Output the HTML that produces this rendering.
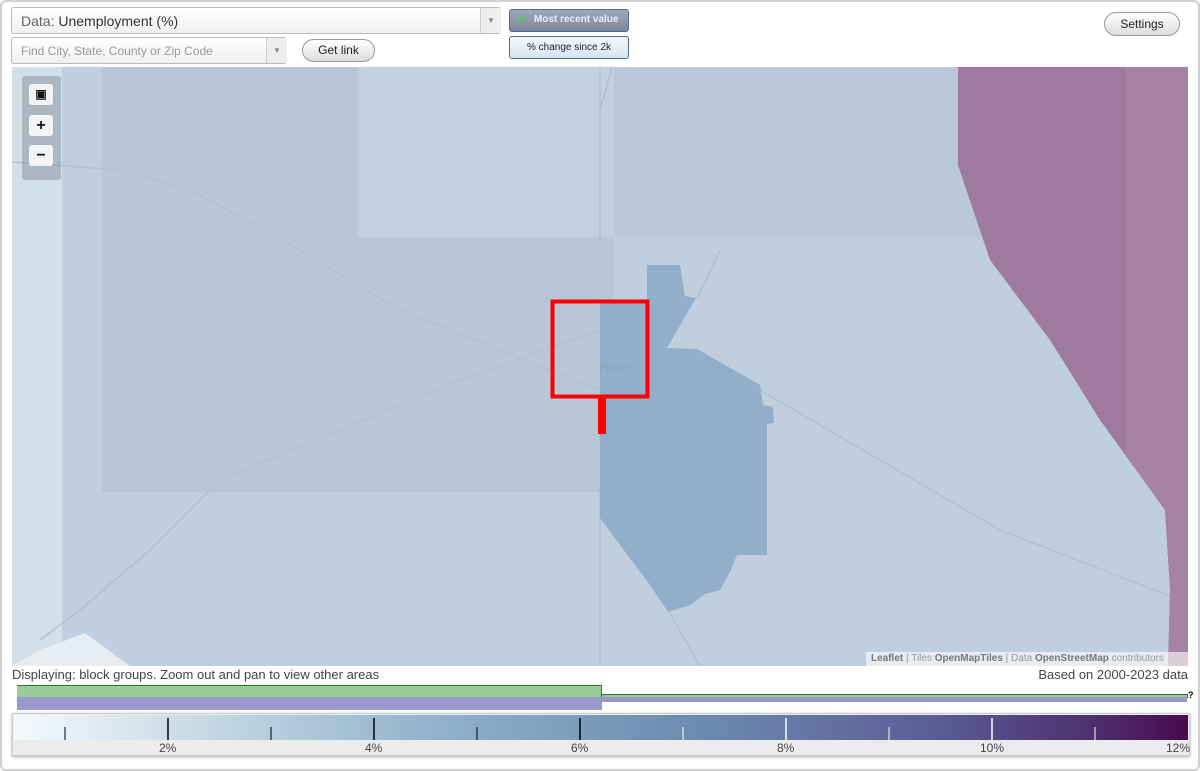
<!DOCTYPE html>
<html><head><meta charset="utf-8"><style>
body{margin:0;width:1200px;height:771px;background:#fff;font-family:"Liberation Sans",sans-serif;position:relative;overflow:hidden}
.frame{position:absolute;left:0;top:0;width:1196px;height:767px;border:2px solid #d0d0d0;border-radius:6px}
.abs{position:absolute}
.sel{border:1px solid #bbb;border-radius:3px;background:linear-gradient(#fff,#f0f0f0);box-sizing:border-box}
.btn{border:1px solid #999;border-radius:12px;background:linear-gradient(#fff,#ddd);font-size:12px;text-align:center;box-sizing:border-box;color:#222}
.zb{position:absolute;left:7px;width:24px;height:21px;background:#f1f3f4;border-radius:3px;text-align:center;font-weight:bold;font-size:16px;line-height:21px;color:#111}
</style></head><body>
<div class="frame"></div>
<div class="abs sel" style="left:11px;top:7px;width:490px;height:27px;font-size:14px;color:#666;padding:5px 9px">Data: <span style="color:#333">Unemployment (%)</span></div>
<div class="abs" style="left:480px;top:8px;width:20px;height:25px;border-left:1px solid #ccc;background:#eee;font-size:8px;color:#888;text-align:center;line-height:25px">▼</div>
<div class="abs sel" style="left:11px;top:37px;width:276px;height:27px;font-size:12px;color:#999;padding:6px 9px">Find City, State, County or Zip Code</div>
<div class="abs" style="left:266px;top:38px;width:20px;height:25px;border-left:1px solid #ccc;background:#eee;font-size:8px;color:#888;text-align:center;line-height:25px">▼</div>
<div class="abs btn" style="left:302px;top:39px;width:73px;height:23px;line-height:21px">Get link</div>
<div class="abs" style="left:509px;top:9px;width:120px;height:23px;border:1px solid #4a6d9a;border-radius:3px;background:linear-gradient(#9ea8b8,#7d879a);box-sizing:border-box;font-size:10px;font-weight:bold;color:#eef;line-height:20px;padding-left:24px">Most recent value<span style="position:absolute;left:6px;top:0;color:#5c5;font-size:13px">✔</span></div>
<div class="abs" style="left:509px;top:36px;width:120px;height:23px;border:1px solid #4a6d9a;border-radius:3px;background:linear-gradient(#f4f8fc,#d8e4ef);box-sizing:border-box;font-size:10px;color:#223;line-height:21px;text-align:center">% change since 2k</div>
<div class="abs btn" style="left:1104px;top:12px;width:76px;height:24px;line-height:22px">Settings</div>

<svg class="abs" style="left:12px;top:67px" width="1176" height="599" viewBox="12 67 1176 599">
<rect x="12" y="67" width="1176" height="599" fill="#bfcfdf"/>
<rect x="12" y="67" width="50" height="599" fill="#d3e0e9"/>
<rect x="102" y="67" width="256" height="425" fill="#b8c7d8"/>
<rect x="358" y="237" width="256" height="255" fill="#b8c7d8"/>
<rect x="358" y="67" width="256" height="170" fill="#c2d1e0"/>
<rect x="614" y="67" width="512" height="170" fill="#b9c9d9"/>
<polygon points="12,666 40,650 85,633 130,666" fill="#e6eef3"/>
<g fill="none" stroke="#b1c1d2" stroke-width="1.5">
<path d="M12,162 L120,170 L190,190 L265,230 L400,310 L600,390 M600,330 L460,380 L220,480 L150,550 L80,610 L40,640"/>
<path d="M600,67 L600,666 M612,67 L600,110 M697,298 L720,250"/>
<path d="M760,390 L1000,530 L1180,600 M668,610 L700,666"/>
</g>
<polygon points="958,67 1188,67 1188,666 1168,666 1170,590 1165,510 1100,420 1050,340 990,260 958,165" fill="#9e7b9e"/>
<polygon points="1126,67 1188,67 1188,666 1168,666 1170,590 1165,510 1126,456" fill="#a682a4"/>
<polygon points="600,302 647,302 647,265 680,265 685,296 696,298 667,348 697,349 760,385 763,405 773,407 774,423 767,424 767,555 737,555 730,572 720,590 705,594 690,605 668,612 650,585 620,545 600,518" fill="#93aec8"/>
<text x="600" y="372" font-size="12" fill="#8ea4bc" font-family="DejaVu Sans">Freer</text>
<rect x="552.5" y="301.5" width="95" height="95" fill="none" stroke="#ff0000" stroke-width="4"/>
<rect x="598" y="397" width="8" height="37" fill="#ff0000"/>
</svg>
<div class="abs" style="left:22px;top:76px;width:39px;height:104px;background:rgba(140,150,160,0.55);border-radius:3px">
<div class="zb" style="top:8px;font-size:12px">▣</div>
<div class="zb" style="top:39px">+</div>
<div class="zb" style="top:69px">−</div></div>
<div class="abs" style="left:866px;top:652px;width:322px;height:14px;background:rgba(255,255,255,0.6);font-size:10px;color:#999;line-height:14px;padding-left:5px;box-sizing:border-box"><b style="color:#777">Leaflet</b> | Tiles <b style="color:#777">OpenMapTiles</b> | Data <b style="color:#777">OpenStreetMap</b> contributors</div>
<div class="abs" style="left:12px;top:667px;font-size:13px;color:#444">Displaying: block groups. Zoom out and pan to view other areas</div>
<div class="abs" style="right:12px;top:667px;font-size:13px;color:#444">Based on 2000-2023 data</div>
<div class="abs" style="left:17px;top:685px;width:585px;height:12px;background:#99cc99;border-top:1px solid #2a7a2a;border-right:1px solid #2a7a2a;box-sizing:border-box"></div>
<div class="abs" style="left:602px;top:694px;width:585px;height:3px;background:#99cc99;border-top:1px solid #2a7a2a;border-right:1px solid #2a7a2a"></div>
<div class="abs" style="left:1188px;top:690px;font-size:9px;font-weight:bold">?</div>
<div class="abs" style="left:17px;top:697px;width:585px;height:13px;background:#9999cc"></div>
<div class="abs" style="left:602px;top:697px;width:585px;height:5px;background:#9999cc"></div>
<div class="abs" style="left:12px;top:713px;width:1178px;height:43px;background:#ececec;box-shadow:0 1px 3px #aaa;border:1px solid #ccc;box-sizing:border-box"></div>
<div class="abs" style="left:14px;top:715px;width:1174px;height:25px;background:linear-gradient(90deg,#f4f9fb,#b5cddc 22%,#8aa9c6 40%,#6b87ae 60%,#5b5e97 78%,#4c2f6f 92%,#4a0a4e)"></div>
<svg class="abs" style="left:0;top:715px" width="1200" height="25">
<g stroke="#000"><line x1="65" y1="12" x2="65" y2="25"/><line x1="168" y1="3" x2="168" y2="25" stroke-width="1.5"/><line x1="271" y1="12" x2="271" y2="25"/><line x1="374" y1="3" x2="374" y2="25" stroke-width="1.5"/><line x1="477" y1="12" x2="477" y2="25"/><line x1="580" y1="3" x2="580" y2="25" stroke-width="1.5"/></g>
<g stroke="#fff"><line x1="683" y1="12" x2="683" y2="25"/><line x1="786" y1="3" x2="786" y2="25" stroke-width="1.5"/><line x1="889" y1="12" x2="889" y2="25"/><line x1="992" y1="3" x2="992" y2="25" stroke-width="1.5"/><line x1="1095" y1="12" x2="1095" y2="25"/></g>
</svg>
<div class="abs" style="top:741px;left:0;width:1200px;font-size:12px;color:#444">
<span class="abs" style="left:159px">2%</span><span class="abs" style="left:365px">4%</span><span class="abs" style="left:571px">6%</span><span class="abs" style="left:777px">8%</span><span class="abs" style="left:980px">10%</span><span class="abs" style="left:1166px">12%</span></div>
</body></html>
